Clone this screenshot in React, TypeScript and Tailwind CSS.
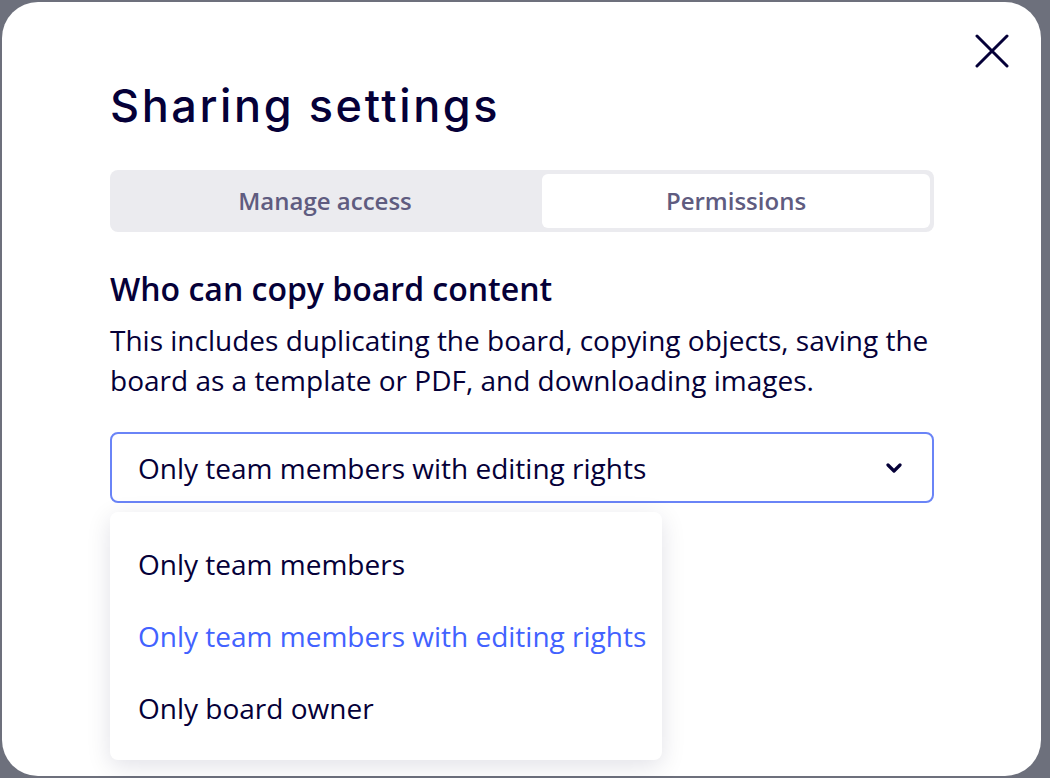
import { useState } from 'react'

const options = [
  'Only team members',
  'Only team members with editing rights',
  'Only board owner',
]

export default function App() {
  const [selected] = useState(1)

  return (
    <div className="h-[778px] w-full bg-[#6d707c] p-[2px] font-['Open_Sans',sans-serif] text-[#050038]">
      <div className="relative h-[774px] w-[1039px] rounded-[36px] bg-white pl-[108px] pt-[76px]">
        {/* close */}
        <button className="absolute right-[30px] top-[30px] flex h-[38px] w-[38px] items-center justify-center">
          <svg width="34" height="34" viewBox="0 0 34 34" fill="none" stroke="#050038" strokeWidth="3" strokeLinecap="round">
            <path d="M2 2L32 32M32 2L2 32" />
          </svg>
        </button>

        <h1 className="font-['Inter',sans-serif] text-[45px] font-medium leading-[56px] tracking-[2.6px]">
          Sharing settings
        </h1>

        <div className="mt-[36px] flex h-[62px] w-[824px] gap-[6px] rounded-[8px] bg-[#ebebef] p-[4px]">
          <button className="flex-1 text-[24px] font-semibold text-[#5f5c80]">Manage access</button>
          <button className="w-[388px] rounded-[6px] bg-white text-[24px] font-semibold text-[#5f5c80]">Permissions</button>
        </div>

        <h2 className="mt-[37px] text-[32px] font-semibold leading-[40px]">Who can copy board content</h2>
        <p className="mt-[11px] w-[830px] text-[28px] leading-[40px]">
          This includes duplicating the board, copying objects, saving the board as a template or PDF, and downloading images.
        </p>

        <div className="relative mt-[32px] w-[824px]">
          <div className="flex h-[71px] items-center justify-between rounded-[8px] border-2 border-[#6a84f7] pl-[26px] pr-[30px]">
            <span className="text-[28px]">{options[selected]}</span>
            <svg width="16" height="12" viewBox="0 0 16 12" fill="none" stroke="#050038" strokeWidth="3.2" strokeLinecap="round" strokeLinejoin="round">
              <path d="M2 3L8 9L14 3" />
            </svg>
          </div>

          <div className="absolute left-0 top-[80px] w-[552px] rounded-[8px] bg-white py-[16px] shadow-[0_6px_24px_rgba(5,0,56,0.12)]">
            {options.map((o, i) => (
              <div
                key={o}
                className={
                  'flex h-[72px] items-center pl-[28px] text-[28px] ' +
                  (i === selected ? 'text-[#4262ff]' : 'text-[#050038]')
                }
              >
                {o}
              </div>
            ))}
          </div>
        </div>
      </div>
    </div>
  )
}
